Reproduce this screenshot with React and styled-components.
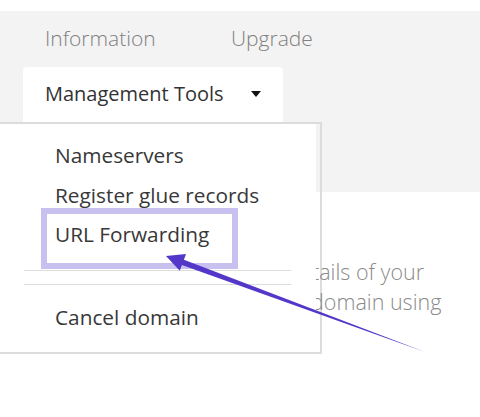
import React from 'react'
import styled, { createGlobalStyle } from 'styled-components'

const GlobalStyle = createGlobalStyle`
  html, body {
    margin: 0;
    padding: 0;
    background: #ffffff;
    font-family: "Open Sans", "Noto Sans", sans-serif;
    overflow: hidden;
  }
`

const Page = styled.div`
  position: relative;
  width: 480px;
  height: 417px;
  padding-top: 11px;
  box-sizing: border-box;
`

const Header = styled.header`
  background: #f3f3f3;
  height: 181px;
  padding-top: 13px;
  box-sizing: border-box;
`

const TabRow = styled.nav`
  display: flex;
  padding-left: 23px;
`

const Tab = styled.div`
  width: ${(p) => p.$width}px;
  padding-left: 22px;
  box-sizing: border-box;
  font-size: 21px;
  line-height: 28px;
  font-weight: 300;
  color: #808080;
`

const ActiveTab = styled.div`
  position: relative;
  margin: 15px 0 0 23px;
  width: 260px;
  height: 60px;
  padding: 13px 22px 0 22px;
  box-sizing: border-box;
  background: #ffffff;
  border-radius: 4px 4px 0 0;
  display: flex;
  align-items: flex-start;
  justify-content: space-between;
  font-size: 20px;
  line-height: 28px;
  color: #333333;
`

const Caret = styled.svg`
  margin-top: 11px;
`

const Dropdown = styled.div`
  position: absolute;
  left: -33px;
  top: 55px;
  width: 332px;
  height: 232px;
  box-sizing: border-box;
  border: 2px solid #dcdcdc;
  background: linear-gradient(to right, #ffffff 324px, transparent 324px);
  z-index: 1;
  padding: 12px 29px 0 32px;
`

const MenuItem = styled.div`
  padding-left: 31px;
  margin-top: ${(p) => p.$top || 0}px;
  font-size: 20.8px;
  line-height: 39.5px;
  color: #383838;
  white-space: nowrap;
`

const Divider = styled.hr`
  border: 0;
  border-top: 1px solid #dddddd;
  margin: ${(p) => p.$top}px 0 0 0;
  height: 0;
`

const Content = styled.main`
  position: relative;
  z-index: 2;
  padding: 65px 0 0 316px;
`

const Paragraph = styled.p`
  margin: 0;
  overflow: hidden;
  font-size: 21.5px;
  line-height: 30px;
  font-weight: 300;
  color: #8a8a8a;
`

const Line = styled.span`
  display: block;
  white-space: nowrap;
  margin-left: ${(p) => p.$shift}px;
`

const Annotation = styled.svg`
  position: absolute;
  left: 0;
  top: 0;
  z-index: 3;
  pointer-events: none;
`

const App = () => {
  return (
    <>
      <GlobalStyle />
      <Page>
        <Header>
          <TabRow>
            <Tab $width={186}>Information</Tab>
            <Tab $width={120}>Upgrade</Tab>
          </TabRow>
          <ActiveTab>
            <span>Management Tools</span>
            <Caret width='10' height='6' viewBox='0 0 10 6'>
              <polygon points='0,0 10,0 5,6' fill='#111' />
            </Caret>
            <Dropdown>
              <MenuItem>Nameservers</MenuItem>
              <MenuItem>Register glue records</MenuItem>
              <MenuItem>URL Forwarding</MenuItem>
              <Divider $top={15} />
              <Divider $top={13} />
              <MenuItem $top={13}>Cancel domain</MenuItem>
            </Dropdown>
          </ActiveTab>
        </Header>
        <Content>
          <Paragraph>
            <Line $shift={-4}>tails of your</Line>
            <Line $shift={-5}>domain using</Line>
          </Paragraph>
        </Content>
        <Annotation width='480' height='417' viewBox='0 0 480 417'>
          <rect x='44' y='211' width='191' height='55' fill='none' stroke='#c8c0ee' strokeWidth='6' />
          <polygon
            points='166,256 186,253.9 183.9,259.7 425,352 181.9,264.9 179.8,270.7'
            fill='#5436c9'
          />
        </Annotation>
      </Page>
    </>
  )
}

export default App
